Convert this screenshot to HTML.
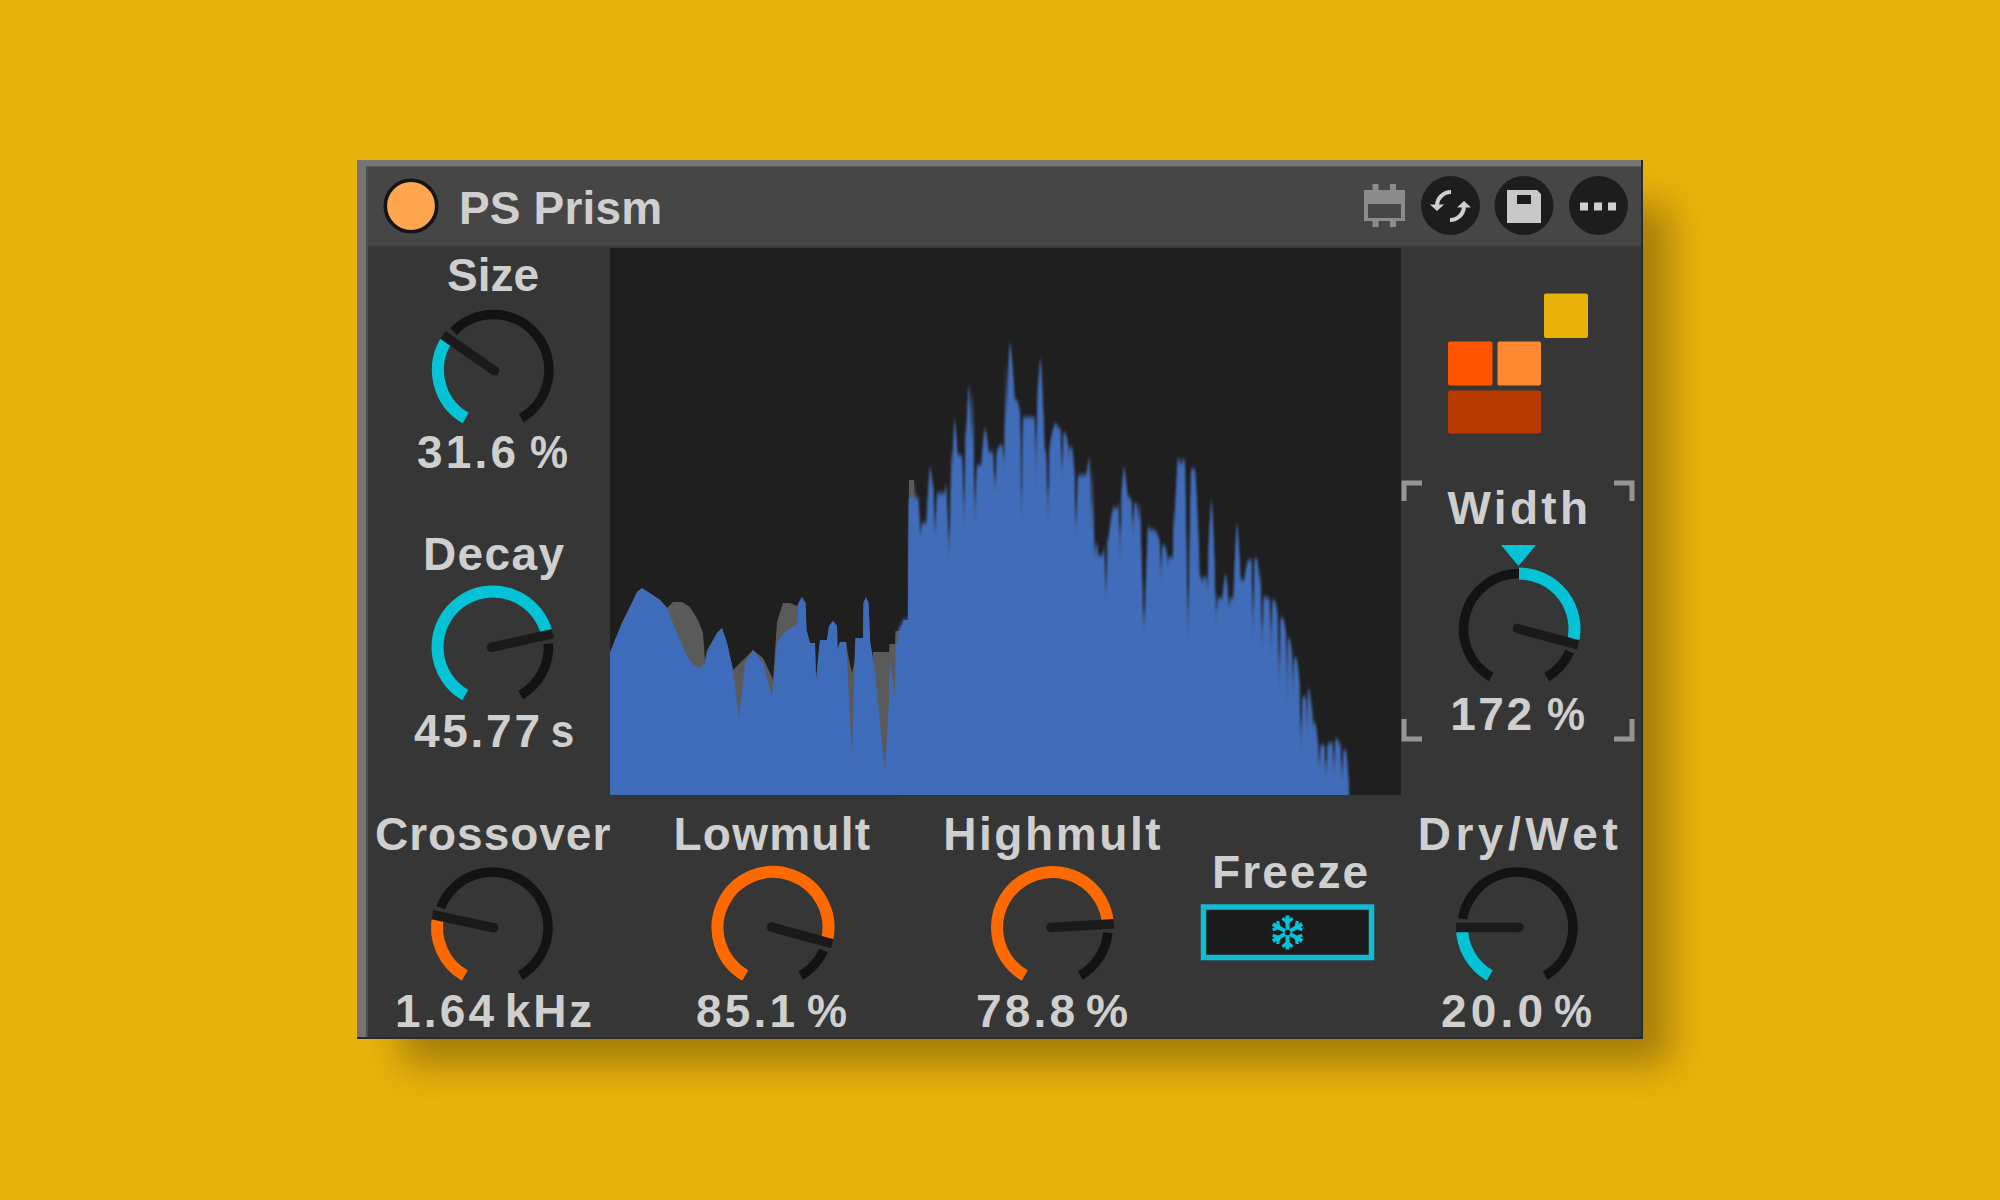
<!DOCTYPE html><html><head><meta charset="utf-8"><style>html,body{margin:0;padding:0;width:2000px;height:1200px;overflow:hidden;background:#E8B20C}svg{display:block}text{font-family:"Liberation Sans",sans-serif;font-weight:bold;fill:#CFCFCF}</style></head><body>
<div id="w">
<svg width="2000" height="1200" viewBox="0 0 2000 1200">
<defs><filter id="sh" x="-20%" y="-20%" width="140%" height="140%"><feGaussianBlur stdDeviation="18"/></filter></defs>
<rect width="2000" height="1200" fill="#E8B20C"/>
<rect x="402" y="205" width="1268" height="860" fill="#000" opacity="0.29" filter="url(#sh)"/>
<rect x="357" y="160" width="1286" height="879" fill="#363636"/>
<rect x="357" y="160" width="1286" height="85" fill="#464646"/>
<rect x="357" y="245" width="1286" height="2" fill="#3E3E3E"/>
<rect x="357" y="160" width="1284" height="6.5" fill="#747877"/>
<rect x="357" y="161" width="9" height="877" fill="#747476"/>
<rect x="366" y="166" width="2" height="872" fill="#4e4e4e"/>
<rect x="1641" y="160" width="2" height="879" fill="#2A2A2A"/>
<rect x="357" y="1037" width="1286" height="2" fill="#2A2A2A"/>
<circle cx="411" cy="206" r="25.7" fill="#FFA64F" stroke="#141414" stroke-width="3.6"/>
<rect x="1364" y="190" width="41" height="31" fill="#8C8C8C"/><rect x="1368" y="204" width="33" height="14" fill="#464646"/>
<rect x="1372.5" y="184" width="6" height="6" fill="#8C8C8C"/><rect x="1372.5" y="221" width="6" height="6" fill="#8C8C8C"/>
<rect x="1390" y="184" width="6" height="6" fill="#8C8C8C"/><rect x="1390" y="221" width="6" height="6" fill="#8C8C8C"/>
<circle cx="1450.5" cy="205.5" r="29.5" fill="#1D1D1D"/>
<circle cx="1524" cy="205.5" r="29.5" fill="#1D1D1D"/>
<circle cx="1598.5" cy="205.5" r="29.5" fill="#1D1D1D"/>
<path d="M1451,192 A14,14 0 0 0 1437,205" fill="none" stroke="#D0D0D0" stroke-width="4"/><path d="M1430,204.5 L1444,204.5 L1437,211 Z" fill="#D0D0D0"/>
<path d="M1450,220 A14,14 0 0 0 1464,207" fill="none" stroke="#D0D0D0" stroke-width="4"/><path d="M1457,207.5 L1471,207.5 L1464,201 Z" fill="#D0D0D0"/>
<path d="M1507,190 L1537,190 L1541,194 L1541,223 L1507,223 Z" fill="#C8C8C8"/><rect x="1517" y="195" width="14" height="9" fill="#1D1D1D"/>
<rect x="1580" y="202.5" width="8" height="8" fill="#D0D0D0"/>
<rect x="1594" y="202.5" width="8" height="8" fill="#D0D0D0"/>
<rect x="1608" y="202.5" width="8" height="8" fill="#D0D0D0"/>
<clipPath id="spc"><rect x="610" y="248" width="791" height="547"/></clipPath>
<filter id="spb" x="-2%" y="-10%" width="104%" height="120%"><feGaussianBlur stdDeviation="0.8 2.5"/></filter>
<rect x="610" y="248" width="791" height="547" fill="#1F1F1F"/>
<g clip-path="url(#spc)">
<path d="M610.0,810 L610.0,653.0 L615.0,640.0 L622.0,623.0 L630.0,607.0 L637.0,592.0 L642.0,588.0 L648.0,592.0 L660.0,600.0 L667.0,608.0 L673.0,602.0 L682.0,602.0 L690.0,607.0 L698.0,620.0 L703.0,633.0 L705.0,660.0 L707.0,650.0 L717.0,633.0 L722.0,628.0 L727.0,643.0 L733.0,670.0 L743.0,660.0 L753.0,650.0 L763.0,658.0 L772.0,677.0 L773.0,680.0 L777.0,622.0 L783.0,603.0 L790.0,603.0 L797.0,606.0 L798.5,603.0 L802.0,597.0 L805.5,603.0 L806.5,630.0 L810.0,643.0 L815.0,643.0 L816.0,680.0 L820.0,640.0 L827.0,640.0 L829.0,626.0 L833.0,621.0 L837.0,626.0 L837.5,650.0 L840.0,642.0 L846.0,642.0 L849.0,660.0 L852.0,673.0 L855.0,660.0 L855.5,638.0 L863.0,638.0 L863.5,603.0 L866.0,597.0 L868.5,603.0 L870.0,640.0 L872.0,671.0 L873.0,652.0 L889.0,652.0 L889.5,644.0 L895.0,644.0 L895.5,631.0 L903.0,631.0 L903.5,620.0 L908.0,620.0 L909.0,480.0 L914.0,480.0 L914.0,810.0 L914.0,810 Z" fill="#5A5A5A"/>
<path d="M610.0,810 L610.0,653.0 L615.0,640.0 L622.0,623.0 L630.0,607.0 L637.0,592.0 L642.0,588.0 L648.0,592.0 L660.0,600.0 L667.0,608.0 L675.0,628.0 L685.0,652.0 L693.0,665.0 L700.0,668.0 L705.0,663.0 L707.0,653.0 L717.0,633.0 L722.0,628.0 L727.0,643.0 L733.0,670.0 L739.0,718.0 L745.0,663.0 L753.0,650.0 L763.0,663.0 L772.0,697.0 L777.0,643.0 L782.0,635.0 L790.0,628.0 L797.0,625.0 L798.5,603.0 L802.0,597.0 L805.5,603.0 L806.5,630.0 L810.0,643.0 L815.0,643.0 L816.0,680.0 L820.0,640.0 L827.0,640.0 L829.0,626.0 L833.0,621.0 L837.0,626.0 L837.5,650.0 L840.0,642.0 L846.0,642.0 L852.0,757.0 L855.0,645.0 L855.5,638.0 L863.0,638.0 L863.5,603.0 L866.0,597.0 L868.5,603.0 L870.0,640.0 L875.0,672.0 L885.0,772.0 L889.0,700.0 L889.5,660.0 L895.0,695.0 L895.5,645.0 L903.0,631.0 L903.5,620.0 L908.0,620.0 L909.0,498.0 L914.0,498.0 L914.0,810.0 L914.0,810 Z" fill="#3F6CBA"/>
<g filter="url(#spb)">
<path d="M898.0,810 L898.0,631.0 L903.5,620.0 L908.5,620.0 L909.0,720.0 L909.5,688.4 L910.0,657.5 L910.5,627.5 L911.0,598.5 L911.5,570.7 L912.0,544.2 L912.5,519.5 L913.0,497.2 L913.5,480.0 L914.0,482.3 L914.5,485.3 L915.0,488.6 L915.5,492.2 L916.0,495.9 L916.5,499.8 L917.0,503.9 L917.5,508.0 L918.0,512.2 L918.5,494.8 L919.0,508.0 L919.5,519.4 L920.0,529.0 L920.5,537.0 L921.0,530.8 L921.5,526.2 L922.0,523.4 L922.5,522.4 L923.0,523.0 L923.5,523.0 L924.0,523.0 L924.5,523.0 L925.0,523.0 L925.5,523.0 L926.0,523.0 L926.5,523.0 L927.0,509.0 L927.5,500.7 L928.0,492.8 L928.5,485.3 L929.0,478.2 L929.5,471.9 L930.0,467.0 L930.5,469.3 L931.0,472.2 L931.5,475.5 L932.0,479.0 L932.5,482.7 L933.0,486.5 L933.5,487.7 L934.0,506.8 L934.5,524.2 L935.0,540.0 L935.5,525.8 L936.0,513.2 L936.5,502.3 L937.0,493.0 L937.5,493.0 L938.0,493.0 L938.5,493.0 L939.0,493.0 L939.5,493.0 L940.0,493.0 L940.5,493.0 L941.0,493.0 L941.5,493.0 L942.0,493.0 L942.5,493.0 L943.0,493.0 L943.5,493.0 L944.0,493.0 L944.5,493.0 L945.0,493.0 L945.5,487.6 L946.0,482.3 L946.5,490.8 L947.0,501.0 L947.5,513.1 L948.0,527.0 L948.5,542.6 L949.0,560.0 L949.5,540.8 L950.0,519.8 L950.5,497.0 L951.0,472.5 L951.5,446.1 L952.0,474.2 L952.5,461.0 L953.0,448.5 L953.5,436.7 L954.0,426.2 L954.5,418.0 L955.0,422.0 L955.5,427.2 L956.0,433.0 L956.5,439.2 L957.0,445.8 L957.5,455.0 L958.0,455.0 L958.5,455.0 L959.0,455.0 L959.5,455.0 L960.0,455.0 L960.5,455.0 L961.0,455.0 L961.5,455.0 L962.0,455.0 L962.5,467.7 L963.0,484.8 L963.5,506.2 L964.0,532.0 L964.5,501.8 L965.0,467.2 L965.5,428.3 L966.0,437.5 L966.5,427.2 L967.0,417.3 L967.5,407.9 L968.0,399.0 L968.5,391.1 L969.0,385.0 L969.5,392.0 L970.0,401.1 L970.5,411.1 L971.0,421.9 L971.5,433.2 L972.0,445.0 L972.5,393.0 L973.0,401.0 L973.5,438.5 L974.0,472.0 L974.5,501.5 L975.0,527.0 L975.5,505.5 L976.0,488.0 L976.5,474.5 L977.0,465.0 L977.5,465.0 L978.0,465.0 L978.5,465.0 L979.0,465.0 L979.5,465.0 L980.0,465.0 L980.5,465.0 L981.0,465.0 L981.5,465.0 L982.0,455.5 L982.5,449.9 L983.0,444.5 L983.5,439.4 L984.0,434.6 L984.5,430.3 L985.0,427.0 L985.5,429.2 L986.0,432.0 L986.5,435.2 L987.0,438.5 L987.5,442.1 L988.0,445.8 L988.5,452.0 L989.0,452.0 L989.5,452.0 L990.0,452.0 L990.5,452.0 L991.0,452.0 L991.5,452.0 L992.0,452.0 L992.5,452.0 L993.0,452.0 L993.5,461.6 L994.0,471.6 L994.5,482.1 L995.0,493.0 L995.5,481.7 L996.0,469.9 L996.5,457.7 L997.0,450.2 L997.5,449.2 L998.0,448.2 L998.5,447.3 L999.0,446.4 L999.5,445.6 L1000.0,445.0 L1000.5,445.0 L1001.0,445.0 L1001.5,445.0 L1002.0,445.0 L1002.5,445.0 L1003.0,454.0 L1003.5,457.3 L1004.0,472.0 L1004.5,445.8 L1005.0,408.2 L1005.5,359.2 L1006.0,419.2 L1006.5,407.8 L1007.0,396.7 L1007.5,385.9 L1008.0,375.6 L1008.5,365.8 L1009.0,356.6 L1009.5,348.4 L1010.0,342.0 L1010.5,345.6 L1011.0,350.2 L1011.5,355.4 L1012.0,360.9 L1012.5,366.7 L1013.0,372.8 L1013.5,379.1 L1014.0,385.5 L1014.5,400.0 L1015.0,400.0 L1015.5,400.0 L1016.0,400.0 L1016.5,400.0 L1017.0,400.0 L1017.5,401.5 L1018.0,403.4 L1018.5,405.5 L1019.0,407.8 L1019.5,410.2 L1020.0,412.8 L1020.5,442.6 L1021.0,483.2 L1021.5,522.0 L1022.0,485.1 L1022.5,450.1 L1023.0,417.0 L1023.5,417.0 L1024.0,417.0 L1024.5,417.0 L1025.0,417.0 L1025.5,417.0 L1026.0,417.0 L1026.5,417.0 L1027.0,417.0 L1027.5,417.0 L1028.0,417.0 L1028.5,417.0 L1029.0,417.0 L1029.5,417.0 L1030.0,417.0 L1030.5,417.0 L1031.0,417.0 L1031.5,417.0 L1032.0,417.0 L1032.5,417.0 L1033.0,417.0 L1033.5,417.0 L1034.0,417.0 L1034.5,417.0 L1035.0,431.2 L1035.5,453.7 L1036.0,488.0 L1036.5,441.9 L1037.0,419.4 L1037.5,394.8 L1038.0,387.6 L1038.5,380.6 L1039.0,374.0 L1039.5,367.8 L1040.0,362.3 L1040.5,358.0 L1041.0,364.7 L1041.5,373.3 L1042.0,383.0 L1042.5,393.3 L1043.0,404.1 L1043.5,415.3 L1044.0,427.0 L1044.5,450.0 L1045.0,450.0 L1045.5,450.0 L1046.0,450.0 L1046.5,465.5 L1047.0,482.6 L1047.5,501.5 L1048.0,522.0 L1048.5,499.8 L1049.0,475.9 L1049.5,450.3 L1050.0,443.2 L1050.5,440.8 L1051.0,438.5 L1051.5,436.2 L1052.0,434.0 L1052.5,431.8 L1053.0,429.7 L1053.5,427.8 L1054.0,425.9 L1054.5,424.3 L1055.0,423.0 L1055.5,423.5 L1056.0,424.1 L1056.5,424.8 L1057.0,425.5 L1057.5,426.3 L1058.0,427.1 L1058.5,427.9 L1059.0,428.7 L1059.5,429.6 L1060.0,430.5 L1060.5,424.7 L1061.0,444.2 L1061.5,462.7 L1062.0,480.0 L1062.5,463.8 L1063.0,448.7 L1063.5,433.0 L1064.0,433.0 L1064.5,433.0 L1065.0,433.0 L1065.5,433.0 L1066.0,434.5 L1066.5,436.5 L1067.0,438.7 L1067.5,441.0 L1068.0,443.5 L1068.5,449.8 L1069.0,463.0 L1069.5,453.2 L1070.0,447.0 L1070.5,447.0 L1071.0,447.0 L1071.5,447.0 L1072.0,447.0 L1072.5,451.0 L1073.0,456.1 L1073.5,461.9 L1074.0,468.0 L1074.5,472.9 L1075.0,497.0 L1075.5,519.4 L1076.0,540.0 L1076.5,521.1 L1077.0,504.0 L1077.5,488.6 L1078.0,475.0 L1078.5,475.0 L1079.0,475.0 L1079.5,475.0 L1080.0,475.0 L1080.5,475.0 L1081.0,475.0 L1081.5,475.0 L1082.0,475.0 L1082.5,475.0 L1083.0,475.0 L1083.5,475.0 L1084.0,475.0 L1084.5,475.0 L1085.0,475.0 L1085.5,475.0 L1086.0,475.0 L1086.5,475.0 L1087.0,470.8 L1087.5,467.8 L1088.0,464.9 L1088.5,462.2 L1089.0,459.8 L1089.5,458.0 L1090.0,468.5 L1090.5,482.2 L1091.0,497.4 L1091.5,513.7 L1092.0,530.8 L1092.5,466.1 L1093.0,491.3 L1093.5,513.4 L1094.0,532.1 L1094.5,547.7 L1095.0,560.0 L1095.5,550.9 L1096.0,545.1 L1096.5,542.5 L1097.0,543.1 L1097.5,546.9 L1098.0,555.0 L1098.5,555.0 L1099.0,555.0 L1099.5,555.0 L1100.0,555.0 L1100.5,555.0 L1101.0,555.0 L1101.5,555.0 L1102.0,555.0 L1102.5,555.0 L1103.0,555.0 L1103.5,550.3 L1104.0,545.6 L1104.5,556.4 L1105.0,569.6 L1105.5,585.1 L1106.0,603.0 L1106.5,582.8 L1107.0,560.2 L1107.5,535.3 L1108.0,543.2 L1108.5,539.1 L1109.0,535.0 L1109.5,531.0 L1110.0,527.1 L1110.5,523.3 L1111.0,519.7 L1111.5,516.3 L1112.0,513.1 L1112.5,510.2 L1113.0,508.0 L1113.5,508.0 L1114.0,508.0 L1114.5,508.0 L1115.0,508.0 L1115.5,508.0 L1116.0,508.0 L1116.5,508.0 L1117.0,508.0 L1117.5,508.0 L1118.0,508.0 L1118.5,501.2 L1119.0,518.6 L1119.5,540.5 L1120.0,567.0 L1120.5,535.9 L1121.0,520.8 L1121.5,491.7 L1122.0,485.9 L1122.5,480.4 L1123.0,475.2 L1123.5,470.6 L1124.0,467.0 L1124.5,469.6 L1125.0,473.0 L1125.5,476.8 L1126.0,480.8 L1126.5,485.1 L1127.0,489.5 L1127.5,497.0 L1128.0,497.0 L1128.5,497.0 L1129.0,497.0 L1129.5,497.0 L1130.0,497.7 L1130.5,498.5 L1131.0,499.4 L1131.5,500.4 L1132.0,509.2 L1132.5,523.4 L1133.0,540.0 L1133.5,524.6 L1134.0,510.4 L1134.5,503.0 L1135.0,503.0 L1135.5,503.0 L1136.0,503.0 L1136.5,503.0 L1137.0,505.9 L1137.5,509.7 L1138.0,514.0 L1138.5,518.5 L1139.0,523.2 L1139.5,504.2 L1140.0,505.5 L1140.5,522.7 L1141.0,539.7 L1141.5,556.3 L1142.0,572.7 L1142.5,588.7 L1143.0,604.5 L1143.5,619.9 L1144.0,635.0 L1144.5,620.2 L1145.0,605.7 L1145.5,591.5 L1146.0,577.6 L1146.5,564.0 L1147.0,550.7 L1147.5,537.8 L1148.0,525.1 L1148.5,526.3 L1149.0,527.5 L1149.5,528.8 L1150.0,530.0 L1150.5,530.0 L1151.0,530.0 L1151.5,530.0 L1152.0,530.0 L1152.5,530.0 L1153.0,530.0 L1153.5,530.0 L1154.0,530.0 L1154.5,530.0 L1155.0,530.0 L1155.5,530.7 L1156.0,531.6 L1156.5,532.7 L1157.0,533.7 L1157.5,534.9 L1158.0,536.1 L1158.5,537.3 L1159.0,538.6 L1159.5,539.9 L1160.0,550.0 L1160.5,564.5 L1161.0,585.0 L1161.5,567.5 L1162.0,553.0 L1162.5,545.0 L1163.0,545.0 L1163.5,545.0 L1164.0,545.0 L1164.5,545.0 L1165.0,546.3 L1165.5,548.0 L1166.0,549.9 L1166.5,551.9 L1167.0,554.0 L1167.5,559.0 L1168.0,567.0 L1168.5,562.0 L1169.0,557.0 L1169.5,557.0 L1170.0,557.0 L1170.5,557.0 L1171.0,557.0 L1171.5,557.0 L1172.0,557.0 L1172.5,557.0 L1173.0,557.0 L1173.5,507.5 L1174.0,532.2 L1174.5,521.3 L1175.0,510.6 L1175.5,500.2 L1176.0,490.3 L1176.5,480.9 L1177.0,472.1 L1177.5,464.1 L1178.0,458.0 L1178.5,458.7 L1179.0,459.6 L1179.5,460.5 L1180.0,461.6 L1180.5,462.7 L1181.0,463.8 L1181.5,465.0 L1182.0,466.2 L1182.5,458.6 L1183.0,459.2 L1183.5,459.8 L1184.0,460.4 L1184.5,461.1 L1185.0,461.7 L1185.5,492.2 L1186.0,522.6 L1186.5,552.8 L1187.0,582.7 L1187.5,612.5 L1188.0,642.0 L1188.5,612.7 L1189.0,583.5 L1189.5,554.6 L1190.0,525.9 L1190.5,497.3 L1191.0,469.0 L1191.5,469.0 L1192.0,469.0 L1192.5,469.0 L1193.0,469.0 L1193.5,469.0 L1194.0,469.0 L1194.5,469.0 L1195.0,469.0 L1195.5,475.7 L1196.0,484.3 L1196.5,494.0 L1197.0,504.3 L1197.5,515.1 L1198.0,526.4 L1198.5,538.0 L1199.0,550.0 L1199.5,577.0 L1200.0,577.0 L1200.5,577.0 L1201.0,577.0 L1201.5,577.0 L1202.0,580.0 L1202.5,583.0 L1203.0,580.0 L1203.5,577.0 L1204.0,577.0 L1204.5,577.0 L1205.0,577.0 L1205.5,577.0 L1206.0,577.0 L1206.5,577.0 L1207.0,585.0 L1207.5,593.0 L1208.0,575.1 L1208.5,547.2 L1209.0,537.6 L1209.5,528.3 L1210.0,519.4 L1210.5,511.2 L1211.0,503.7 L1211.5,498.0 L1212.0,505.3 L1212.5,514.7 L1213.0,525.1 L1213.5,536.3 L1214.0,548.1 L1214.5,560.3 L1215.0,591.0 L1215.5,592.3 L1216.0,627.0 L1216.5,609.0 L1217.0,607.7 L1217.5,598.0 L1218.0,598.0 L1218.5,598.0 L1219.0,598.0 L1219.5,598.0 L1220.0,598.0 L1220.5,598.0 L1221.0,598.0 L1221.5,598.0 L1222.0,598.0 L1222.5,598.0 L1223.0,591.8 L1223.5,587.3 L1224.0,583.2 L1224.5,579.2 L1225.0,575.7 L1225.5,573.0 L1226.0,575.7 L1226.5,579.2 L1227.0,583.2 L1227.5,587.3 L1228.0,597.8 L1228.5,599.8 L1229.0,610.0 L1229.5,603.9 L1230.0,602.0 L1230.5,598.0 L1231.0,598.0 L1231.5,598.0 L1232.0,598.0 L1232.5,598.0 L1233.0,598.0 L1233.5,598.0 L1234.0,579.0 L1234.5,567.8 L1235.0,557.0 L1235.5,546.8 L1236.0,537.3 L1236.5,528.6 L1237.0,522.0 L1237.5,527.1 L1238.0,533.6 L1238.5,540.9 L1239.0,548.7 L1239.5,557.0 L1240.0,565.5 L1240.5,580.0 L1241.0,580.0 L1241.5,580.0 L1242.0,580.0 L1242.5,580.0 L1243.0,580.0 L1243.5,580.0 L1244.0,580.0 L1244.5,580.0 L1245.0,575.0 L1245.5,572.1 L1246.0,569.2 L1246.5,566.5 L1247.0,564.0 L1247.5,561.7 L1248.0,560.0 L1248.5,560.0 L1249.0,560.0 L1249.5,560.0 L1250.0,560.0 L1250.5,560.0 L1251.0,560.0 L1251.5,559.7 L1252.0,586.2 L1252.5,613.0 L1253.0,640.0 L1253.5,612.8 L1254.0,586.3 L1254.5,559.2 L1255.0,558.9 L1255.5,558.7 L1256.0,558.4 L1256.5,558.2 L1257.0,558.0 L1257.5,561.4 L1258.0,565.8 L1258.5,570.7 L1259.0,576.0 L1259.5,581.5 L1260.0,587.2 L1260.5,564.5 L1261.0,598.0 L1261.5,627.2 L1262.0,652.0 L1262.5,631.5 L1263.0,615.3 L1263.5,597.0 L1264.0,597.0 L1264.5,597.0 L1265.0,597.0 L1265.5,597.0 L1266.0,597.0 L1266.5,597.3 L1267.0,597.6 L1267.5,598.0 L1268.0,598.4 L1268.5,598.8 L1269.0,599.2 L1269.5,597.5 L1270.0,609.4 L1270.5,632.4 L1271.0,655.0 L1271.5,632.8 L1272.0,611.0 L1272.5,600.0 L1273.0,600.0 L1273.5,600.0 L1274.0,600.0 L1274.5,600.0 L1275.0,600.8 L1275.5,602.8 L1276.0,605.2 L1276.5,607.8 L1277.0,610.6 L1277.5,613.5 L1278.0,633.1 L1278.5,663.7 L1279.0,692.0 L1279.5,666.1 L1280.0,642.7 L1280.5,618.0 L1281.0,618.0 L1281.5,618.0 L1282.0,618.0 L1282.5,618.0 L1283.0,618.0 L1283.5,619.7 L1284.0,622.0 L1284.5,624.5 L1285.0,627.2 L1285.5,630.1 L1286.0,633.0 L1286.5,667.5 L1287.0,707.0 L1287.5,672.5 L1288.0,638.0 L1288.5,638.0 L1289.0,638.0 L1289.5,638.0 L1290.0,640.2 L1290.5,643.0 L1291.0,646.1 L1291.5,649.5 L1292.0,653.0 L1292.5,674.0 L1293.0,700.0 L1293.5,679.0 L1294.0,658.0 L1294.5,658.0 L1295.0,658.0 L1295.5,658.0 L1296.0,658.0 L1296.5,658.0 L1297.0,660.8 L1297.5,664.5 L1298.0,668.6 L1298.5,672.9 L1299.0,677.5 L1299.5,682.3 L1300.0,709.8 L1300.5,725.9 L1301.0,755.0 L1301.5,732.4 L1302.0,716.3 L1302.5,697.0 L1303.0,697.0 L1303.5,697.0 L1304.0,697.0 L1304.5,697.0 L1305.0,697.0 L1305.5,697.0 L1306.0,697.0 L1306.5,714.8 L1307.0,737.0 L1307.5,715.0 L1308.0,691.3 L1308.5,689.8 L1309.0,688.5 L1309.5,689.8 L1310.0,694.8 L1310.5,700.6 L1311.0,706.9 L1311.5,713.5 L1312.0,699.3 L1312.5,718.8 L1313.0,727.0 L1313.5,724.5 L1314.0,722.0 L1314.5,722.0 L1315.0,722.0 L1315.5,723.2 L1316.0,726.6 L1316.5,730.5 L1317.0,734.8 L1317.5,739.2 L1318.0,741.7 L1318.5,758.4 L1319.0,772.0 L1319.5,761.5 L1320.0,754.0 L1320.5,745.0 L1321.0,745.0 L1321.5,745.0 L1322.0,745.0 L1322.5,745.0 L1323.0,745.0 L1323.5,745.0 L1324.0,745.0 L1324.5,744.7 L1325.0,756.2 L1325.5,768.0 L1326.0,780.0 L1326.5,767.8 L1327.0,756.3 L1327.5,744.1 L1328.0,743.8 L1328.5,743.5 L1329.0,743.2 L1329.5,743.0 L1330.0,743.0 L1330.5,743.0 L1331.0,743.0 L1331.5,743.0 L1332.0,743.0 L1332.5,741.8 L1333.0,748.0 L1333.5,762.5 L1334.0,778.0 L1334.5,763.2 L1335.0,747.8 L1335.5,739.6 L1336.0,739.0 L1336.5,738.4 L1337.0,738.0 L1337.5,739.0 L1338.0,740.4 L1338.5,741.9 L1339.0,743.5 L1339.5,745.2 L1340.0,747.0 L1340.5,740.0 L1341.0,755.7 L1341.5,770.0 L1342.0,783.0 L1342.5,771.3 L1343.0,761.0 L1343.5,750.0 L1344.0,750.0 L1344.5,750.0 L1345.0,750.0 L1345.5,750.0 L1346.0,750.0 L1346.5,754.4 L1347.0,760.0 L1347.5,766.3 L1348.0,773.1 L1348.5,780.1 L1349.0,787.5 L1349.0,810 Z" fill="#5A5A5A"/>
<path d="M898.0,810 L898.0,631.0 L903.5,620.0 L908.5,620.0 L909.0,498.0 L909.5,498.0 L910.0,498.0 L910.5,498.0 L911.0,498.0 L911.5,498.0 L912.0,498.0 L912.5,498.0 L913.0,498.0 L913.5,498.0 L914.0,498.0 L914.5,498.0 L915.0,498.0 L915.5,498.0 L916.0,498.0 L916.5,498.0 L917.0,498.0 L917.5,498.0 L918.0,498.0 L918.5,494.8 L919.0,508.0 L919.5,519.4 L920.0,529.0 L920.5,537.0 L921.0,530.8 L921.5,526.2 L922.0,523.4 L922.5,522.4 L923.0,523.0 L923.5,523.0 L924.0,523.0 L924.5,523.0 L925.0,523.0 L925.5,523.0 L926.0,523.0 L926.5,523.0 L927.0,509.0 L927.5,500.7 L928.0,492.8 L928.5,485.3 L929.0,478.2 L929.5,471.9 L930.0,467.0 L930.5,469.3 L931.0,472.2 L931.5,475.5 L932.0,479.0 L932.5,482.7 L933.0,486.5 L933.5,487.7 L934.0,506.8 L934.5,524.2 L935.0,540.0 L935.5,525.8 L936.0,513.2 L936.5,502.3 L937.0,493.0 L937.5,493.0 L938.0,493.0 L938.5,493.0 L939.0,493.0 L939.5,493.0 L940.0,493.0 L940.5,493.0 L941.0,493.0 L941.5,493.0 L942.0,493.0 L942.5,493.0 L943.0,493.0 L943.5,493.0 L944.0,493.0 L944.5,493.0 L945.0,493.0 L945.5,487.6 L946.0,482.3 L946.5,490.8 L947.0,501.0 L947.5,513.1 L948.0,527.0 L948.5,542.6 L949.0,560.0 L949.5,540.8 L950.0,519.8 L950.5,497.0 L951.0,472.5 L951.5,446.1 L952.0,474.2 L952.5,461.0 L953.0,448.5 L953.5,436.7 L954.0,426.2 L954.5,418.0 L955.0,422.0 L955.5,427.2 L956.0,433.0 L956.5,439.2 L957.0,445.8 L957.5,455.0 L958.0,455.0 L958.5,455.0 L959.0,455.0 L959.5,455.0 L960.0,455.0 L960.5,455.0 L961.0,455.0 L961.5,455.0 L962.0,455.0 L962.5,467.7 L963.0,484.8 L963.5,506.2 L964.0,532.0 L964.5,501.8 L965.0,467.2 L965.5,428.3 L966.0,437.5 L966.5,427.2 L967.0,417.3 L967.5,407.9 L968.0,399.0 L968.5,391.1 L969.0,385.0 L969.5,392.0 L970.0,401.1 L970.5,411.1 L971.0,421.9 L971.5,433.2 L972.0,445.0 L972.5,393.0 L973.0,401.0 L973.5,438.5 L974.0,472.0 L974.5,501.5 L975.0,527.0 L975.5,505.5 L976.0,488.0 L976.5,474.5 L977.0,465.0 L977.5,465.0 L978.0,465.0 L978.5,465.0 L979.0,465.0 L979.5,465.0 L980.0,465.0 L980.5,465.0 L981.0,465.0 L981.5,465.0 L982.0,455.5 L982.5,449.9 L983.0,444.5 L983.5,439.4 L984.0,434.6 L984.5,430.3 L985.0,427.0 L985.5,429.2 L986.0,432.0 L986.5,435.2 L987.0,438.5 L987.5,442.1 L988.0,445.8 L988.5,452.0 L989.0,452.0 L989.5,452.0 L990.0,452.0 L990.5,452.0 L991.0,452.0 L991.5,452.0 L992.0,452.0 L992.5,452.0 L993.0,452.0 L993.5,461.6 L994.0,471.6 L994.5,482.1 L995.0,493.0 L995.5,481.7 L996.0,469.9 L996.5,457.7 L997.0,450.2 L997.5,449.2 L998.0,448.2 L998.5,447.3 L999.0,446.4 L999.5,445.6 L1000.0,445.0 L1000.5,445.0 L1001.0,445.0 L1001.5,445.0 L1002.0,445.0 L1002.5,445.0 L1003.0,454.0 L1003.5,457.3 L1004.0,472.0 L1004.5,445.8 L1005.0,408.2 L1005.5,359.2 L1006.0,419.2 L1006.5,407.8 L1007.0,396.7 L1007.5,385.9 L1008.0,375.6 L1008.5,365.8 L1009.0,356.6 L1009.5,348.4 L1010.0,342.0 L1010.5,345.6 L1011.0,350.2 L1011.5,355.4 L1012.0,360.9 L1012.5,366.7 L1013.0,372.8 L1013.5,379.1 L1014.0,385.5 L1014.5,400.0 L1015.0,400.0 L1015.5,400.0 L1016.0,400.0 L1016.5,400.0 L1017.0,400.0 L1017.5,401.5 L1018.0,403.4 L1018.5,405.5 L1019.0,407.8 L1019.5,410.2 L1020.0,412.8 L1020.5,442.6 L1021.0,483.2 L1021.5,522.0 L1022.0,485.1 L1022.5,450.1 L1023.0,417.0 L1023.5,417.0 L1024.0,417.0 L1024.5,417.0 L1025.0,417.0 L1025.5,417.0 L1026.0,417.0 L1026.5,417.0 L1027.0,417.0 L1027.5,417.0 L1028.0,417.0 L1028.5,417.0 L1029.0,417.0 L1029.5,417.0 L1030.0,417.0 L1030.5,417.0 L1031.0,417.0 L1031.5,417.0 L1032.0,417.0 L1032.5,417.0 L1033.0,417.0 L1033.5,417.0 L1034.0,417.0 L1034.5,417.0 L1035.0,431.2 L1035.5,453.7 L1036.0,488.0 L1036.5,441.9 L1037.0,419.4 L1037.5,394.8 L1038.0,387.6 L1038.5,380.6 L1039.0,374.0 L1039.5,367.8 L1040.0,362.3 L1040.5,358.0 L1041.0,364.7 L1041.5,373.3 L1042.0,383.0 L1042.5,393.3 L1043.0,404.1 L1043.5,415.3 L1044.0,427.0 L1044.5,450.0 L1045.0,450.0 L1045.5,450.0 L1046.0,450.0 L1046.5,465.5 L1047.0,482.6 L1047.5,501.5 L1048.0,522.0 L1048.5,499.8 L1049.0,475.9 L1049.5,450.3 L1050.0,443.2 L1050.5,440.8 L1051.0,438.5 L1051.5,436.2 L1052.0,434.0 L1052.5,431.8 L1053.0,429.7 L1053.5,427.8 L1054.0,425.9 L1054.5,424.3 L1055.0,423.0 L1055.5,423.5 L1056.0,424.1 L1056.5,424.8 L1057.0,425.5 L1057.5,426.3 L1058.0,427.1 L1058.5,427.9 L1059.0,428.7 L1059.5,429.6 L1060.0,430.5 L1060.5,424.7 L1061.0,444.2 L1061.5,462.7 L1062.0,480.0 L1062.5,463.8 L1063.0,448.7 L1063.5,433.0 L1064.0,433.0 L1064.5,433.0 L1065.0,433.0 L1065.5,433.0 L1066.0,434.5 L1066.5,436.5 L1067.0,438.7 L1067.5,441.0 L1068.0,443.5 L1068.5,449.8 L1069.0,463.0 L1069.5,453.2 L1070.0,447.0 L1070.5,447.0 L1071.0,447.0 L1071.5,447.0 L1072.0,447.0 L1072.5,451.0 L1073.0,456.1 L1073.5,461.9 L1074.0,468.0 L1074.5,472.9 L1075.0,497.0 L1075.5,519.4 L1076.0,540.0 L1076.5,521.1 L1077.0,504.0 L1077.5,488.6 L1078.0,475.0 L1078.5,475.0 L1079.0,475.0 L1079.5,475.0 L1080.0,475.0 L1080.5,475.0 L1081.0,475.0 L1081.5,475.0 L1082.0,475.0 L1082.5,475.0 L1083.0,475.0 L1083.5,475.0 L1084.0,475.0 L1084.5,475.0 L1085.0,475.0 L1085.5,475.0 L1086.0,475.0 L1086.5,475.0 L1087.0,470.8 L1087.5,467.8 L1088.0,464.9 L1088.5,462.2 L1089.0,459.8 L1089.5,458.0 L1090.0,468.5 L1090.5,482.2 L1091.0,497.4 L1091.5,513.7 L1092.0,530.8 L1092.5,466.1 L1093.0,491.3 L1093.5,513.4 L1094.0,532.1 L1094.5,547.7 L1095.0,560.0 L1095.5,550.9 L1096.0,545.1 L1096.5,542.5 L1097.0,543.1 L1097.5,546.9 L1098.0,555.0 L1098.5,555.0 L1099.0,555.0 L1099.5,555.0 L1100.0,555.0 L1100.5,555.0 L1101.0,555.0 L1101.5,555.0 L1102.0,555.0 L1102.5,555.0 L1103.0,555.0 L1103.5,550.3 L1104.0,545.6 L1104.5,556.4 L1105.0,569.6 L1105.5,585.1 L1106.0,603.0 L1106.5,582.8 L1107.0,560.2 L1107.5,535.3 L1108.0,543.2 L1108.5,539.1 L1109.0,535.0 L1109.5,531.0 L1110.0,527.1 L1110.5,523.3 L1111.0,519.7 L1111.5,516.3 L1112.0,513.1 L1112.5,510.2 L1113.0,508.0 L1113.5,508.0 L1114.0,508.0 L1114.5,508.0 L1115.0,508.0 L1115.5,508.0 L1116.0,508.0 L1116.5,508.0 L1117.0,508.0 L1117.5,508.0 L1118.0,508.0 L1118.5,501.2 L1119.0,518.6 L1119.5,540.5 L1120.0,567.0 L1120.5,535.9 L1121.0,520.8 L1121.5,491.7 L1122.0,485.9 L1122.5,480.4 L1123.0,475.2 L1123.5,470.6 L1124.0,467.0 L1124.5,469.6 L1125.0,473.0 L1125.5,476.8 L1126.0,480.8 L1126.5,485.1 L1127.0,489.5 L1127.5,497.0 L1128.0,497.0 L1128.5,497.0 L1129.0,497.0 L1129.5,497.0 L1130.0,497.7 L1130.5,498.5 L1131.0,499.4 L1131.5,500.4 L1132.0,509.2 L1132.5,523.4 L1133.0,540.0 L1133.5,524.6 L1134.0,510.4 L1134.5,503.0 L1135.0,503.0 L1135.5,503.0 L1136.0,503.0 L1136.5,503.0 L1137.0,505.9 L1137.5,509.7 L1138.0,514.0 L1138.5,518.5 L1139.0,523.2 L1139.5,504.2 L1140.0,505.5 L1140.5,522.7 L1141.0,539.7 L1141.5,556.3 L1142.0,572.7 L1142.5,588.7 L1143.0,604.5 L1143.5,619.9 L1144.0,635.0 L1144.5,620.2 L1145.0,605.7 L1145.5,591.5 L1146.0,577.6 L1146.5,564.0 L1147.0,550.7 L1147.5,537.8 L1148.0,525.1 L1148.5,526.3 L1149.0,527.5 L1149.5,528.8 L1150.0,530.0 L1150.5,530.0 L1151.0,530.0 L1151.5,530.0 L1152.0,530.0 L1152.5,530.0 L1153.0,530.0 L1153.5,530.0 L1154.0,530.0 L1154.5,530.0 L1155.0,530.0 L1155.5,530.7 L1156.0,531.6 L1156.5,532.7 L1157.0,533.7 L1157.5,534.9 L1158.0,536.1 L1158.5,537.3 L1159.0,538.6 L1159.5,539.9 L1160.0,550.0 L1160.5,564.5 L1161.0,585.0 L1161.5,567.5 L1162.0,553.0 L1162.5,545.0 L1163.0,545.0 L1163.5,545.0 L1164.0,545.0 L1164.5,545.0 L1165.0,546.3 L1165.5,548.0 L1166.0,549.9 L1166.5,551.9 L1167.0,554.0 L1167.5,559.0 L1168.0,567.0 L1168.5,562.0 L1169.0,557.0 L1169.5,557.0 L1170.0,557.0 L1170.5,557.0 L1171.0,557.0 L1171.5,557.0 L1172.0,557.0 L1172.5,557.0 L1173.0,557.0 L1173.5,507.5 L1174.0,532.2 L1174.5,521.3 L1175.0,510.6 L1175.5,500.2 L1176.0,490.3 L1176.5,480.9 L1177.0,472.1 L1177.5,464.1 L1178.0,458.0 L1178.5,458.7 L1179.0,459.6 L1179.5,460.5 L1180.0,461.6 L1180.5,462.7 L1181.0,463.8 L1181.5,465.0 L1182.0,466.2 L1182.5,458.6 L1183.0,459.2 L1183.5,459.8 L1184.0,460.4 L1184.5,461.1 L1185.0,461.7 L1185.5,492.2 L1186.0,522.6 L1186.5,552.8 L1187.0,582.7 L1187.5,612.5 L1188.0,642.0 L1188.5,612.7 L1189.0,583.5 L1189.5,554.6 L1190.0,525.9 L1190.5,497.3 L1191.0,469.0 L1191.5,469.0 L1192.0,469.0 L1192.5,469.0 L1193.0,469.0 L1193.5,469.0 L1194.0,469.0 L1194.5,469.0 L1195.0,469.0 L1195.5,475.7 L1196.0,484.3 L1196.5,494.0 L1197.0,504.3 L1197.5,515.1 L1198.0,526.4 L1198.5,538.0 L1199.0,550.0 L1199.5,577.0 L1200.0,577.0 L1200.5,577.0 L1201.0,577.0 L1201.5,577.0 L1202.0,580.0 L1202.5,583.0 L1203.0,580.0 L1203.5,577.0 L1204.0,577.0 L1204.5,577.0 L1205.0,577.0 L1205.5,577.0 L1206.0,577.0 L1206.5,577.0 L1207.0,585.0 L1207.5,593.0 L1208.0,575.1 L1208.5,547.2 L1209.0,537.6 L1209.5,528.3 L1210.0,519.4 L1210.5,511.2 L1211.0,503.7 L1211.5,498.0 L1212.0,505.3 L1212.5,514.7 L1213.0,525.1 L1213.5,536.3 L1214.0,548.1 L1214.5,560.3 L1215.0,591.0 L1215.5,592.3 L1216.0,627.0 L1216.5,609.0 L1217.0,607.7 L1217.5,598.0 L1218.0,598.0 L1218.5,598.0 L1219.0,598.0 L1219.5,598.0 L1220.0,598.0 L1220.5,598.0 L1221.0,598.0 L1221.5,598.0 L1222.0,598.0 L1222.5,598.0 L1223.0,591.8 L1223.5,587.3 L1224.0,583.2 L1224.5,579.2 L1225.0,575.7 L1225.5,573.0 L1226.0,575.7 L1226.5,579.2 L1227.0,583.2 L1227.5,587.3 L1228.0,597.8 L1228.5,599.8 L1229.0,610.0 L1229.5,603.9 L1230.0,602.0 L1230.5,598.0 L1231.0,598.0 L1231.5,598.0 L1232.0,598.0 L1232.5,598.0 L1233.0,598.0 L1233.5,598.0 L1234.0,579.0 L1234.5,567.8 L1235.0,557.0 L1235.5,546.8 L1236.0,537.3 L1236.5,528.6 L1237.0,522.0 L1237.5,527.1 L1238.0,533.6 L1238.5,540.9 L1239.0,548.7 L1239.5,557.0 L1240.0,565.5 L1240.5,580.0 L1241.0,580.0 L1241.5,580.0 L1242.0,580.0 L1242.5,580.0 L1243.0,580.0 L1243.5,580.0 L1244.0,580.0 L1244.5,580.0 L1245.0,575.0 L1245.5,572.1 L1246.0,569.2 L1246.5,566.5 L1247.0,564.0 L1247.5,561.7 L1248.0,560.0 L1248.5,560.0 L1249.0,560.0 L1249.5,560.0 L1250.0,560.0 L1250.5,560.0 L1251.0,560.0 L1251.5,559.7 L1252.0,586.2 L1252.5,613.0 L1253.0,640.0 L1253.5,612.8 L1254.0,586.3 L1254.5,559.2 L1255.0,558.9 L1255.5,558.7 L1256.0,558.4 L1256.5,558.2 L1257.0,558.0 L1257.5,561.4 L1258.0,565.8 L1258.5,570.7 L1259.0,576.0 L1259.5,581.5 L1260.0,587.2 L1260.5,564.5 L1261.0,598.0 L1261.5,627.2 L1262.0,652.0 L1262.5,631.5 L1263.0,615.3 L1263.5,597.0 L1264.0,597.0 L1264.5,597.0 L1265.0,597.0 L1265.5,597.0 L1266.0,597.0 L1266.5,597.3 L1267.0,597.6 L1267.5,598.0 L1268.0,598.4 L1268.5,598.8 L1269.0,599.2 L1269.5,597.5 L1270.0,609.4 L1270.5,632.4 L1271.0,655.0 L1271.5,632.8 L1272.0,611.0 L1272.5,600.0 L1273.0,600.0 L1273.5,600.0 L1274.0,600.0 L1274.5,600.0 L1275.0,600.8 L1275.5,602.8 L1276.0,605.2 L1276.5,607.8 L1277.0,610.6 L1277.5,613.5 L1278.0,633.1 L1278.5,663.7 L1279.0,692.0 L1279.5,666.1 L1280.0,642.7 L1280.5,618.0 L1281.0,618.0 L1281.5,618.0 L1282.0,618.0 L1282.5,618.0 L1283.0,618.0 L1283.5,619.7 L1284.0,622.0 L1284.5,624.5 L1285.0,627.2 L1285.5,630.1 L1286.0,633.0 L1286.5,667.5 L1287.0,707.0 L1287.5,672.5 L1288.0,638.0 L1288.5,638.0 L1289.0,638.0 L1289.5,638.0 L1290.0,640.2 L1290.5,643.0 L1291.0,646.1 L1291.5,649.5 L1292.0,653.0 L1292.5,674.0 L1293.0,700.0 L1293.5,679.0 L1294.0,658.0 L1294.5,658.0 L1295.0,658.0 L1295.5,658.0 L1296.0,658.0 L1296.5,658.0 L1297.0,660.8 L1297.5,664.5 L1298.0,668.6 L1298.5,672.9 L1299.0,677.5 L1299.5,682.3 L1300.0,709.8 L1300.5,725.9 L1301.0,755.0 L1301.5,732.4 L1302.0,716.3 L1302.5,697.0 L1303.0,697.0 L1303.5,697.0 L1304.0,697.0 L1304.5,697.0 L1305.0,697.0 L1305.5,697.0 L1306.0,697.0 L1306.5,714.8 L1307.0,737.0 L1307.5,715.0 L1308.0,691.3 L1308.5,689.8 L1309.0,688.5 L1309.5,689.8 L1310.0,694.8 L1310.5,700.6 L1311.0,706.9 L1311.5,713.5 L1312.0,699.3 L1312.5,718.8 L1313.0,727.0 L1313.5,724.5 L1314.0,722.0 L1314.5,722.0 L1315.0,722.0 L1315.5,723.2 L1316.0,726.6 L1316.5,730.5 L1317.0,734.8 L1317.5,739.2 L1318.0,741.7 L1318.5,758.4 L1319.0,772.0 L1319.5,761.5 L1320.0,754.0 L1320.5,745.0 L1321.0,745.0 L1321.5,745.0 L1322.0,745.0 L1322.5,745.0 L1323.0,745.0 L1323.5,745.0 L1324.0,745.0 L1324.5,744.7 L1325.0,756.2 L1325.5,768.0 L1326.0,780.0 L1326.5,767.8 L1327.0,756.3 L1327.5,744.1 L1328.0,743.8 L1328.5,743.5 L1329.0,743.2 L1329.5,743.0 L1330.0,743.0 L1330.5,743.0 L1331.0,743.0 L1331.5,743.0 L1332.0,743.0 L1332.5,741.8 L1333.0,748.0 L1333.5,762.5 L1334.0,778.0 L1334.5,763.2 L1335.0,747.8 L1335.5,739.6 L1336.0,739.0 L1336.5,738.4 L1337.0,738.0 L1337.5,739.0 L1338.0,740.4 L1338.5,741.9 L1339.0,743.5 L1339.5,745.2 L1340.0,747.0 L1340.5,740.0 L1341.0,755.7 L1341.5,770.0 L1342.0,783.0 L1342.5,771.3 L1343.0,761.0 L1343.5,750.0 L1344.0,750.0 L1344.5,750.0 L1345.0,750.0 L1345.5,750.0 L1346.0,750.0 L1346.5,754.4 L1347.0,760.0 L1347.5,766.3 L1348.0,773.1 L1348.5,780.1 L1349.0,787.5 L1349.0,810 Z" fill="#3F6CBA"/>
</g>
</g>
<rect x="1544" y="293.5" width="44" height="44.5" rx="2" fill="#E8B20A"/>
<rect x="1448" y="341.5" width="44.5" height="44" rx="2" fill="#FF5500"/>
<rect x="1497.5" y="341.5" width="43.5" height="44" rx="2" fill="#FF8833"/>
<rect x="1448" y="390.5" width="93" height="43" rx="2" fill="#B83A00"/>
<path d="M1404,501 L1404,483 L1422,483" fill="none" stroke="#959595" stroke-width="5"/>
<path d="M1614,483 L1632,483 L1632,501" fill="none" stroke="#959595" stroke-width="5"/>
<path d="M1404,719 L1404,739 L1422,739" fill="none" stroke="#959595" stroke-width="5"/>
<path d="M1614,739 L1632,739 L1632,719" fill="none" stroke="#959595" stroke-width="5"/>
<path d="M453.34,331.59 A55.5,55.5 0 1 1 521.15,418.06" fill="none" stroke="#131313" stroke-width="9.5"/><path d="M465.65,418.06 A55.5,55.5 0 0 1 447.83,338.33" fill="none" stroke="#05C3D7" stroke-width="12"/><line x1="494.63" y1="370.86" x2="442.90" y2="334.90" stroke="#1A1A1A" stroke-width="9.5"/><circle cx="494.63" cy="370.86" r="4.75" fill="#1A1A1A"/>
<path d="M548.40,643.61 A55.5,55.5 0 0 1 520.75,695.06" fill="none" stroke="#131313" stroke-width="9.5"/><path d="M465.25,695.06 A55.5,55.5 0 1 1 547.18,634.99" fill="none" stroke="#05C3D7" stroke-width="12"/><line x1="491.54" y1="647.32" x2="553.04" y2="633.69" stroke="#1A1A1A" stroke-width="9.5"/><circle cx="491.54" cy="647.32" r="4.75" fill="#1A1A1A"/>
<path d="M1491.25,677.06 A55.5,55.5 0 0 1 1519.00,573.50" fill="none" stroke="#131313" stroke-width="9.5"/><path d="M1569.70,651.57 A55.5,55.5 0 0 1 1546.75,677.06" fill="none" stroke="#131313" stroke-width="9.5"/><path d="M1519.00,573.50 A55.5,55.5 0 0 1 1572.61,643.36" fill="none" stroke="#05C3D7" stroke-width="12"/><line x1="1517.55" y1="628.61" x2="1578.40" y2="644.92" stroke="#1A1A1A" stroke-width="9.5"/><circle cx="1517.55" cy="628.61" r="4.75" fill="#1A1A1A"/>
<path d="M1501,545 L1536,545 L1518.5,566 Z" fill="#05C3D7"/>
<path d="M440.69,907.61 A55.5,55.5 0 1 1 520.25,975.56" fill="none" stroke="#131313" stroke-width="9.5"/><path d="M464.75,975.56 A55.5,55.5 0 0 1 438.21,915.96" fill="none" stroke="#FF6A00" stroke-width="12"/><line x1="493.97" y1="927.81" x2="432.34" y2="914.71" stroke="#1A1A1A" stroke-width="9.5"/><circle cx="493.97" cy="927.81" r="4.75" fill="#1A1A1A"/>
<path d="M823.58,950.34 A55.5,55.5 0 0 1 800.75,975.56" fill="none" stroke="#131313" stroke-width="9.5"/><path d="M745.25,975.56 A55.5,55.5 0 1 1 826.53,942.14" fill="none" stroke="#FF6A00" stroke-width="12"/><line x1="771.55" y1="927.10" x2="832.32" y2="943.73" stroke="#1A1A1A" stroke-width="9.5"/><circle cx="771.55" cy="927.10" r="4.75" fill="#1A1A1A"/>
<path d="M1107.75,932.72 A55.5,55.5 0 0 1 1080.25,975.56" fill="none" stroke="#131313" stroke-width="9.5"/><path d="M1024.75,975.56 A55.5,55.5 0 1 1 1107.89,924.02" fill="none" stroke="#FF6A00" stroke-width="12"/><line x1="1051.00" y1="927.59" x2="1113.88" y2="923.64" stroke="#1A1A1A" stroke-width="9.5"/><circle cx="1051.00" cy="927.59" r="4.75" fill="#1A1A1A"/>
<path d="M1462.68,918.82 A55.5,55.5 0 1 1 1545.25,975.56" fill="none" stroke="#131313" stroke-width="9.5"/><path d="M1489.75,975.56 A55.5,55.5 0 0 1 1462.00,927.50" fill="none" stroke="#05C3D7" stroke-width="12"/><line x1="1519.00" y1="927.50" x2="1456.00" y2="927.50" stroke="#1A1A1A" stroke-width="9.5"/><circle cx="1519.00" cy="927.50" r="4.75" fill="#1A1A1A"/>
<rect x="1203.5" y="907" width="168" height="50.5" fill="#1B1B1B" stroke="#12BBD0" stroke-width="5.5"/>
<line x1="1287.5" y1="932.5" x2="1287.5" y2="915.5" stroke="#05C3D7" stroke-width="4"/><line x1="1287.5" y1="922.5" x2="1282.5" y2="918.3" stroke="#05C3D7" stroke-width="3.2"/><line x1="1287.5" y1="922.5" x2="1292.5" y2="918.3" stroke="#05C3D7" stroke-width="3.2"/><line x1="1287.5" y1="932.5" x2="1302.2" y2="924.0" stroke="#05C3D7" stroke-width="4"/><line x1="1296.2" y1="927.5" x2="1297.3" y2="921.1" stroke="#05C3D7" stroke-width="3.2"/><line x1="1296.2" y1="927.5" x2="1302.3" y2="929.7" stroke="#05C3D7" stroke-width="3.2"/><line x1="1287.5" y1="932.5" x2="1302.2" y2="941.0" stroke="#05C3D7" stroke-width="4"/><line x1="1296.2" y1="937.5" x2="1302.3" y2="935.3" stroke="#05C3D7" stroke-width="3.2"/><line x1="1296.2" y1="937.5" x2="1297.3" y2="943.9" stroke="#05C3D7" stroke-width="3.2"/><line x1="1287.5" y1="932.5" x2="1287.5" y2="949.5" stroke="#05C3D7" stroke-width="4"/><line x1="1287.5" y1="942.5" x2="1292.5" y2="946.7" stroke="#05C3D7" stroke-width="3.2"/><line x1="1287.5" y1="942.5" x2="1282.5" y2="946.7" stroke="#05C3D7" stroke-width="3.2"/><line x1="1287.5" y1="932.5" x2="1272.8" y2="941.0" stroke="#05C3D7" stroke-width="4"/><line x1="1278.8" y1="937.5" x2="1277.7" y2="943.9" stroke="#05C3D7" stroke-width="3.2"/><line x1="1278.8" y1="937.5" x2="1272.7" y2="935.3" stroke="#05C3D7" stroke-width="3.2"/><line x1="1287.5" y1="932.5" x2="1272.8" y2="924.0" stroke="#05C3D7" stroke-width="4"/><line x1="1278.8" y1="927.5" x2="1272.7" y2="929.7" stroke="#05C3D7" stroke-width="3.2"/><line x1="1278.8" y1="927.5" x2="1277.7" y2="921.1" stroke="#05C3D7" stroke-width="3.2"/><circle cx="1287.5" cy="932.5" r="2.8" fill="#1B1B1B"/>
<text transform="translate(458.94,224) scale(1.0,1)" x="0" y="0" font-size="46" textLength="203.12" lengthAdjust="spacing">PS Prism</text>
<text transform="translate(446.95,291) scale(1.0,1)" x="0" y="0" font-size="46" textLength="92.09" lengthAdjust="spacing">Size</text>
<text transform="translate(416.99,468) scale(1.0,1)" x="0" y="0" font-size="46" textLength="99.03" lengthAdjust="spacing">31.6</text>
<text transform="translate(530.00,468) scale(1.0,1)" x="0" y="0" font-size="46" textLength="38.00" lengthAdjust="spacingAndGlyphs">%</text>
<text transform="translate(422.96,570) scale(1.0,1)" x="0" y="0" font-size="46" textLength="141.06" lengthAdjust="spacing">Decay</text>
<text transform="translate(413.99,747) scale(1.0,1)" x="0" y="0" font-size="46" textLength="126.02" lengthAdjust="spacing">45.77</text>
<text transform="translate(550.76,747) scale(1.0,1)" x="0" y="0" font-size="46" textLength="23.47" lengthAdjust="spacingAndGlyphs">s</text>
<text transform="translate(1447.49,524) scale(1.0,1)" x="0" y="0" font-size="46" textLength="140.56" lengthAdjust="spacing">Width</text>
<text transform="translate(1450.14,730) scale(1.0,1)" x="0" y="0" font-size="46" textLength="81.96" lengthAdjust="spacing">172</text>
<text transform="translate(1547.00,730) scale(1.0,1)" x="0" y="0" font-size="46" textLength="38.00" lengthAdjust="spacingAndGlyphs">%</text>
<text transform="translate(374.99,850) scale(1.0,1)" x="0" y="0" font-size="46" textLength="235.31" lengthAdjust="spacing">Crossover</text>
<text transform="translate(673.46,850) scale(1.0,1)" x="0" y="0" font-size="46" textLength="196.55" lengthAdjust="spacing">Lowmult</text>
<text transform="translate(943.15,850) scale(1.0,1)" x="0" y="0" font-size="46" textLength="217.56" lengthAdjust="spacing">Highmult</text>
<text transform="translate(1212.04,887.7) scale(1.0,1)" x="0" y="0" font-size="46" textLength="156.00" lengthAdjust="spacing">Freeze</text>
<text transform="translate(1417.67,850) scale(1.0,1)" x="0" y="0" font-size="46" textLength="200.15" lengthAdjust="spacing">Dry/Wet</text>
<text transform="translate(394.97,1027.4) scale(1.0,1)" x="0" y="0" font-size="46" textLength="99.05" lengthAdjust="spacing">1.64</text>
<text transform="translate(504.87,1027.4) scale(1.0,1)" x="0" y="0" font-size="46" textLength="87.20" lengthAdjust="spacing">kHz</text>
<text transform="translate(695.96,1027) scale(1.0,1)" x="0" y="0" font-size="46" textLength="99.07" lengthAdjust="spacing">85.1</text>
<text transform="translate(807.00,1027) scale(1.0,1)" x="0" y="0" font-size="46" textLength="40.06" lengthAdjust="spacingAndGlyphs">%</text>
<text transform="translate(975.96,1027) scale(1.0,1)" x="0" y="0" font-size="46" textLength="99.09" lengthAdjust="spacing">78.8</text>
<text transform="translate(1085.97,1027) scale(1.0,1)" x="0" y="0" font-size="46" textLength="42.13" lengthAdjust="spacingAndGlyphs">%</text>
<text transform="translate(1440.96,1027) scale(1.0,1)" x="0" y="0" font-size="46" textLength="102.08" lengthAdjust="spacing">20.0</text>
<text transform="translate(1554.00,1027) scale(1.0,1)" x="0" y="0" font-size="46" textLength="38.00" lengthAdjust="spacingAndGlyphs">%</text>
</svg></div></body></html>
